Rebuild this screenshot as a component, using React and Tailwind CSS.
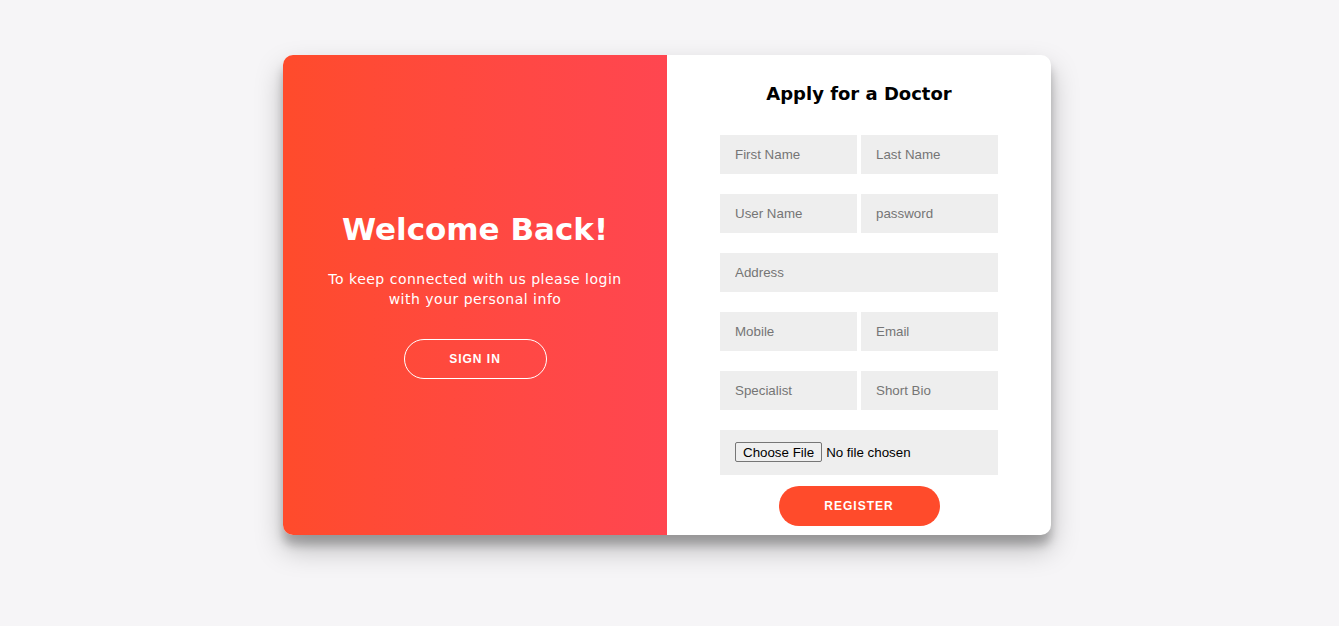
import React from "react";

const head = { fontFamily: '"DejaVu Sans", "Liberation Sans", sans-serif' };

function Field({ placeholder, wide }) {
    return (
        <input
            placeholder={placeholder}
            className={
                (wide ? "w-[278px]" : "w-[137px]") +
                " h-[39px] bg-[#eeeeee] px-[15px] text-[13.33px] text-[#333] placeholder:text-[#757575] outline-none font-['Liberation_Sans',Arial,sans-serif]"
            }
        />
    );
}

export default function App() {
    return (
        <div className="min-h-screen bg-[#f6f5f7] pt-[55px] pr-[5px] flex justify-center items-start">
            <div className="w-[768px] h-[480px] flex rounded-[10px] overflow-hidden bg-white shadow-[0_14px_28px_rgba(0,0,0,0.25),0_10px_10px_rgba(0,0,0,0.22)]">
                {/* left overlay panel */}
                <div className="w-[384px] h-full flex flex-col items-center justify-center px-[36px] text-white text-center bg-gradient-to-r from-[#ff4b2b] to-[#ff4650]">
                    <h1 style={head} className="text-[31px] font-bold leading-[40px] mt-[-2px]">
                        Welcome Back!
                    </h1>
                    <p style={head} className="text-[14px] leading-[20px] tracking-[0.5px] mt-[20px] mb-[30px]">
                        To keep connected with us please login with your personal info
                    </p>
                    <button className="w-[143px] h-[40px] rounded-full border border-white text-[12px] font-bold tracking-[1px] font-['Liberation_Sans',Arial,sans-serif]">
                        SIGN IN
                    </button>
                </div>

                {/* right form panel */}
                <div className="w-[384px] h-full flex flex-col items-center pt-[27px]">
                    <h2 style={head} className="text-[18px] font-bold text-black leading-[23px]">
                        Apply for a Doctor
                    </h2>
                    <form className="w-[278px] mt-[30px] flex flex-col gap-[20px]">
                        <div className="flex gap-[4px]">
                            <Field placeholder="First Name" />
                            <Field placeholder="Last Name" />
                        </div>
                        <div className="flex gap-[4px]">
                            <Field placeholder="User Name" />
                            <Field placeholder="password" />
                        </div>
                        <Field placeholder="Address" wide />
                        <div className="flex gap-[4px]">
                            <Field placeholder="Mobile" />
                            <Field placeholder="Email" />
                        </div>
                        <div className="flex gap-[4px]">
                            <Field placeholder="Specialist" />
                            <Field placeholder="Short Bio" />
                        </div>
                        <div className="h-[45px] bg-[#eeeeee] px-[15px] flex items-center">
                            <input
                                type="file"
                                className="text-[13.33px] text-black font-['Liberation_Sans',Arial,sans-serif] file:mr-[4px] file:h-[20px] file:px-[7px] file:border file:border-[#767676] file:rounded-[2px] file:bg-[#efefef] file:text-black file:text-[13.33px]"
                            />
                        </div>
                    </form>
                    <button className="mt-[11px] w-[161px] h-[40px] rounded-full bg-[#ff4b2b] text-white text-[12px] font-bold tracking-[1px] font-['Liberation_Sans',Arial,sans-serif]">
                        REGISTER
                    </button>
                </div>
            </div>
        </div>
    );
}
